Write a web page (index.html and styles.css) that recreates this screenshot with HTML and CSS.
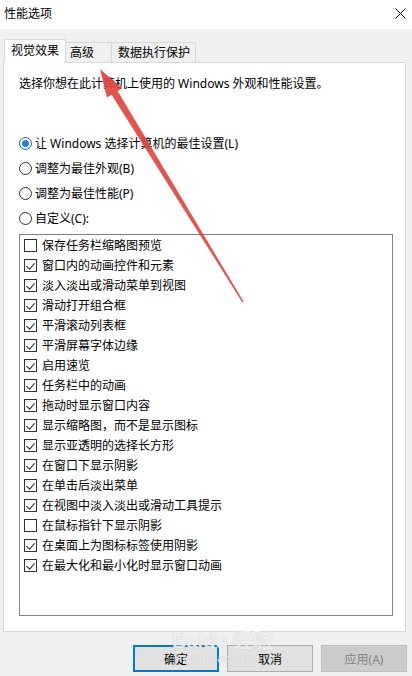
FILE: index.html
```html
<!DOCTYPE html>
<html lang="zh-CN">
<head>
<meta charset="utf-8">
<title>性能选项</title>
<link rel="stylesheet" href="styles.css">
</head>
<body>
<div class="window">
  <header class="titlebar">
    <span class="title">性能选项</span>
    <svg class="close" width="11" height="11" viewBox="0 0 11 11"><path d="M0.5 0.5 L10.5 10.5 M10.5 0.5 L0.5 10.5" stroke="#111" stroke-width="1" fill="none"/></svg>
  </header>
  <div class="body">
    <div class="tabs">
      <div class="tab active">视觉效果</div>
      <div class="tab t2">高级</div>
      <div class="tab t3">数据执行保护</div>
    </div>
    <div class="panel">
      <p class="intro">选择你想在此计算机上使用的 Windows 外观和性能设置。</p>
      <div class="radios">
        <div class="radio checked"><span class="circle"><span class="dot"></span></span>让 Windows 选择计算机的最佳设置(L)</div>
        <div class="radio"><span class="circle"></span>调整为最佳外观(B)</div>
        <div class="radio"><span class="circle"></span>调整为最佳性能(P)</div>
        <div class="radio"><span class="circle"></span>自定义(C):</div>
      </div>
      <div class="listbox">
        <div class="item"><span class="cb"></span>保存任务栏缩略图预览</div>
        <div class="item"><span class="cb on"></span>窗口内的动画控件和元素</div>
        <div class="item"><span class="cb on"></span>淡入淡出或滑动菜单到视图</div>
        <div class="item"><span class="cb on"></span>滑动打开组合框</div>
        <div class="item"><span class="cb on"></span>平滑滚动列表框</div>
        <div class="item"><span class="cb on"></span>平滑屏幕字体边缘</div>
        <div class="item"><span class="cb on"></span>启用速览</div>
        <div class="item"><span class="cb on"></span>任务栏中的动画</div>
        <div class="item"><span class="cb on"></span>拖动时显示窗口内容</div>
        <div class="item"><span class="cb on"></span>显示缩略图，而不是显示图标</div>
        <div class="item"><span class="cb on"></span>显示亚透明的选择长方形</div>
        <div class="item"><span class="cb on"></span>在窗口下显示阴影</div>
        <div class="item"><span class="cb on"></span>在单击后淡出菜单</div>
        <div class="item"><span class="cb on"></span>在视图中淡入淡出或滑动工具提示</div>
        <div class="item"><span class="cb"></span>在鼠标指针下显示阴影</div>
        <div class="item"><span class="cb on"></span>在桌面上为图标标签使用阴影</div>
        <div class="item"><span class="cb on"></span>在最大化和最小化时显示窗口动画</div>
      </div>
    </div>
    <div class="buttons">
      <button class="btn default">确定</button>
      <button class="btn">取消</button>
      <button class="btn disabled">应用(A)</button>
    </div>
  </div>
  <svg class="arrow" width="412" height="676" viewBox="0 0 412 676">
    <polygon points="100,69 122.3,88.2 117.6,91.1 243.6,301.6 242.4,302.4 111.6,94.7 106.9,97.6" fill="#e0463f" fill-opacity="0.92"/>
  </svg>
  <div class="watermark">
    <div class="wm-logo">Bai<span class="paw">du</span> 经验</div>
    <div class="wm-url">jingyan.baidu.com</div>
  </div>
</div>
</body>
</html>
```

FILE: styles.css
```css
* { box-sizing: border-box; }
html, body { margin: 0; padding: 0; }
body {
  width: 412px;
  height: 676px;
  overflow: hidden;
  font-family: "Noto Sans", "Noto Sans CJK SC", sans-serif;
  font-size: 12px;
  color: #000;
  background: #f0f0f0;
}
.window {
  position: relative;
  width: 412px;
  height: 676px;
}
.titlebar {
  height: 29px;
  background: #ffffff;
  display: flex;
  align-items: center;
  justify-content: space-between;
  padding: 0 6px 2px 4px;
}
.title { line-height: 16px; }
.close { display: block; margin-right: 0; }
.body { padding-top: 10px; }
.tabs {
  display: flex;
  align-items: flex-end;
  height: 23px;
  padding-left: 4px;
}
.tab {
  height: 20px;
  line-height: 19px;
  border: 1px solid #d9d9d9;
  border-bottom: none;
  background: #f0f0f0;
  white-space: nowrap;
}
.tab.active {
  height: 24px;
  line-height: 22px;
  margin-bottom: -1px;
  padding: 0 6px;
  background: #fff;
  position: relative;
  z-index: 1;
}
.tab.t2 { width: 47px; margin-left: -1px; padding-left: 4px; }
.tab.t3 { width: 85px; margin-left: -1px; padding-left: 6px; }
.panel {
  margin: 0 6px 0 3px;
  height: 570px;
  background: #fff;
  border: 1px solid #d9d9d9;
  padding: 11px 0 0 15px;
}
.intro { margin: 0; line-height: 20px; }
.radios { margin-top: 36px; }
.radio {
  height: 25px;
  display: flex;
  align-items: center;
  padding-top: 1px;
}
.circle {
  width: 13px;
  height: 13px;
  border: 1px solid #333;
  border-radius: 50%;
  margin-right: 3px;
  display: flex;
  align-items: center;
  justify-content: center;
  flex: none;
}
.radio.checked .circle { border-color: #0a62b0; }
.dot {
  width: 7px;
  height: 7px;
  border-radius: 50%;
  background: #2a7fd4;
}
.listbox {
  margin-top: 4px;
  width: 374px;
  height: 382px;
  border: 1px solid #828282;
  padding: 0 0 0 4px;
}
.item {
  height: 20px;
  display: flex;
  align-items: center;
}
.cb {
  width: 13px;
  height: 13px;
  border: 1px solid #333;
  margin-right: 5px;
  flex: none;
  position: relative;
}
.cb.on::after {
  content: "";
  position: absolute;
  left: 3px;
  top: 1px;
  width: 4px;
  height: 7px;
  border-right: 1px solid #222;
  border-bottom: 1px solid #222;
  transform: rotate(40deg);
}
.buttons {
  display: flex;
  justify-content: flex-end;
  gap: 8px;
  margin-top: 13px;
  padding-right: 5px;
}
.btn {
  width: 86px;
  height: 27px;
  font-family: inherit;
  font-size: 12px;
  color: #000;
  background: #e1e1e1;
  border: 1px solid #adadad;
  padding: 0;
}
.btn.default { border: 2px solid #0078d7; }
.btn.disabled { background: #cccccc; border-color: #bfbfbf; color: #838383; }
.arrow {
  position: absolute;
  left: 0;
  top: 0;
  pointer-events: none;
}
.watermark {
  position: absolute;
  left: 172px;
  top: 630px;
  color: rgba(255,255,255,0.75);
  text-shadow: 0 0 1px rgba(150,150,150,0.6);
  pointer-events: none;
}
.wm-logo { font-size: 20px; font-weight: bold; line-height: 22px; font-family: "Liberation Sans", "Noto Sans CJK SC", sans-serif; }
.wm-url { font-size: 10px; line-height: 12px; margin-left: 2px; }
```
